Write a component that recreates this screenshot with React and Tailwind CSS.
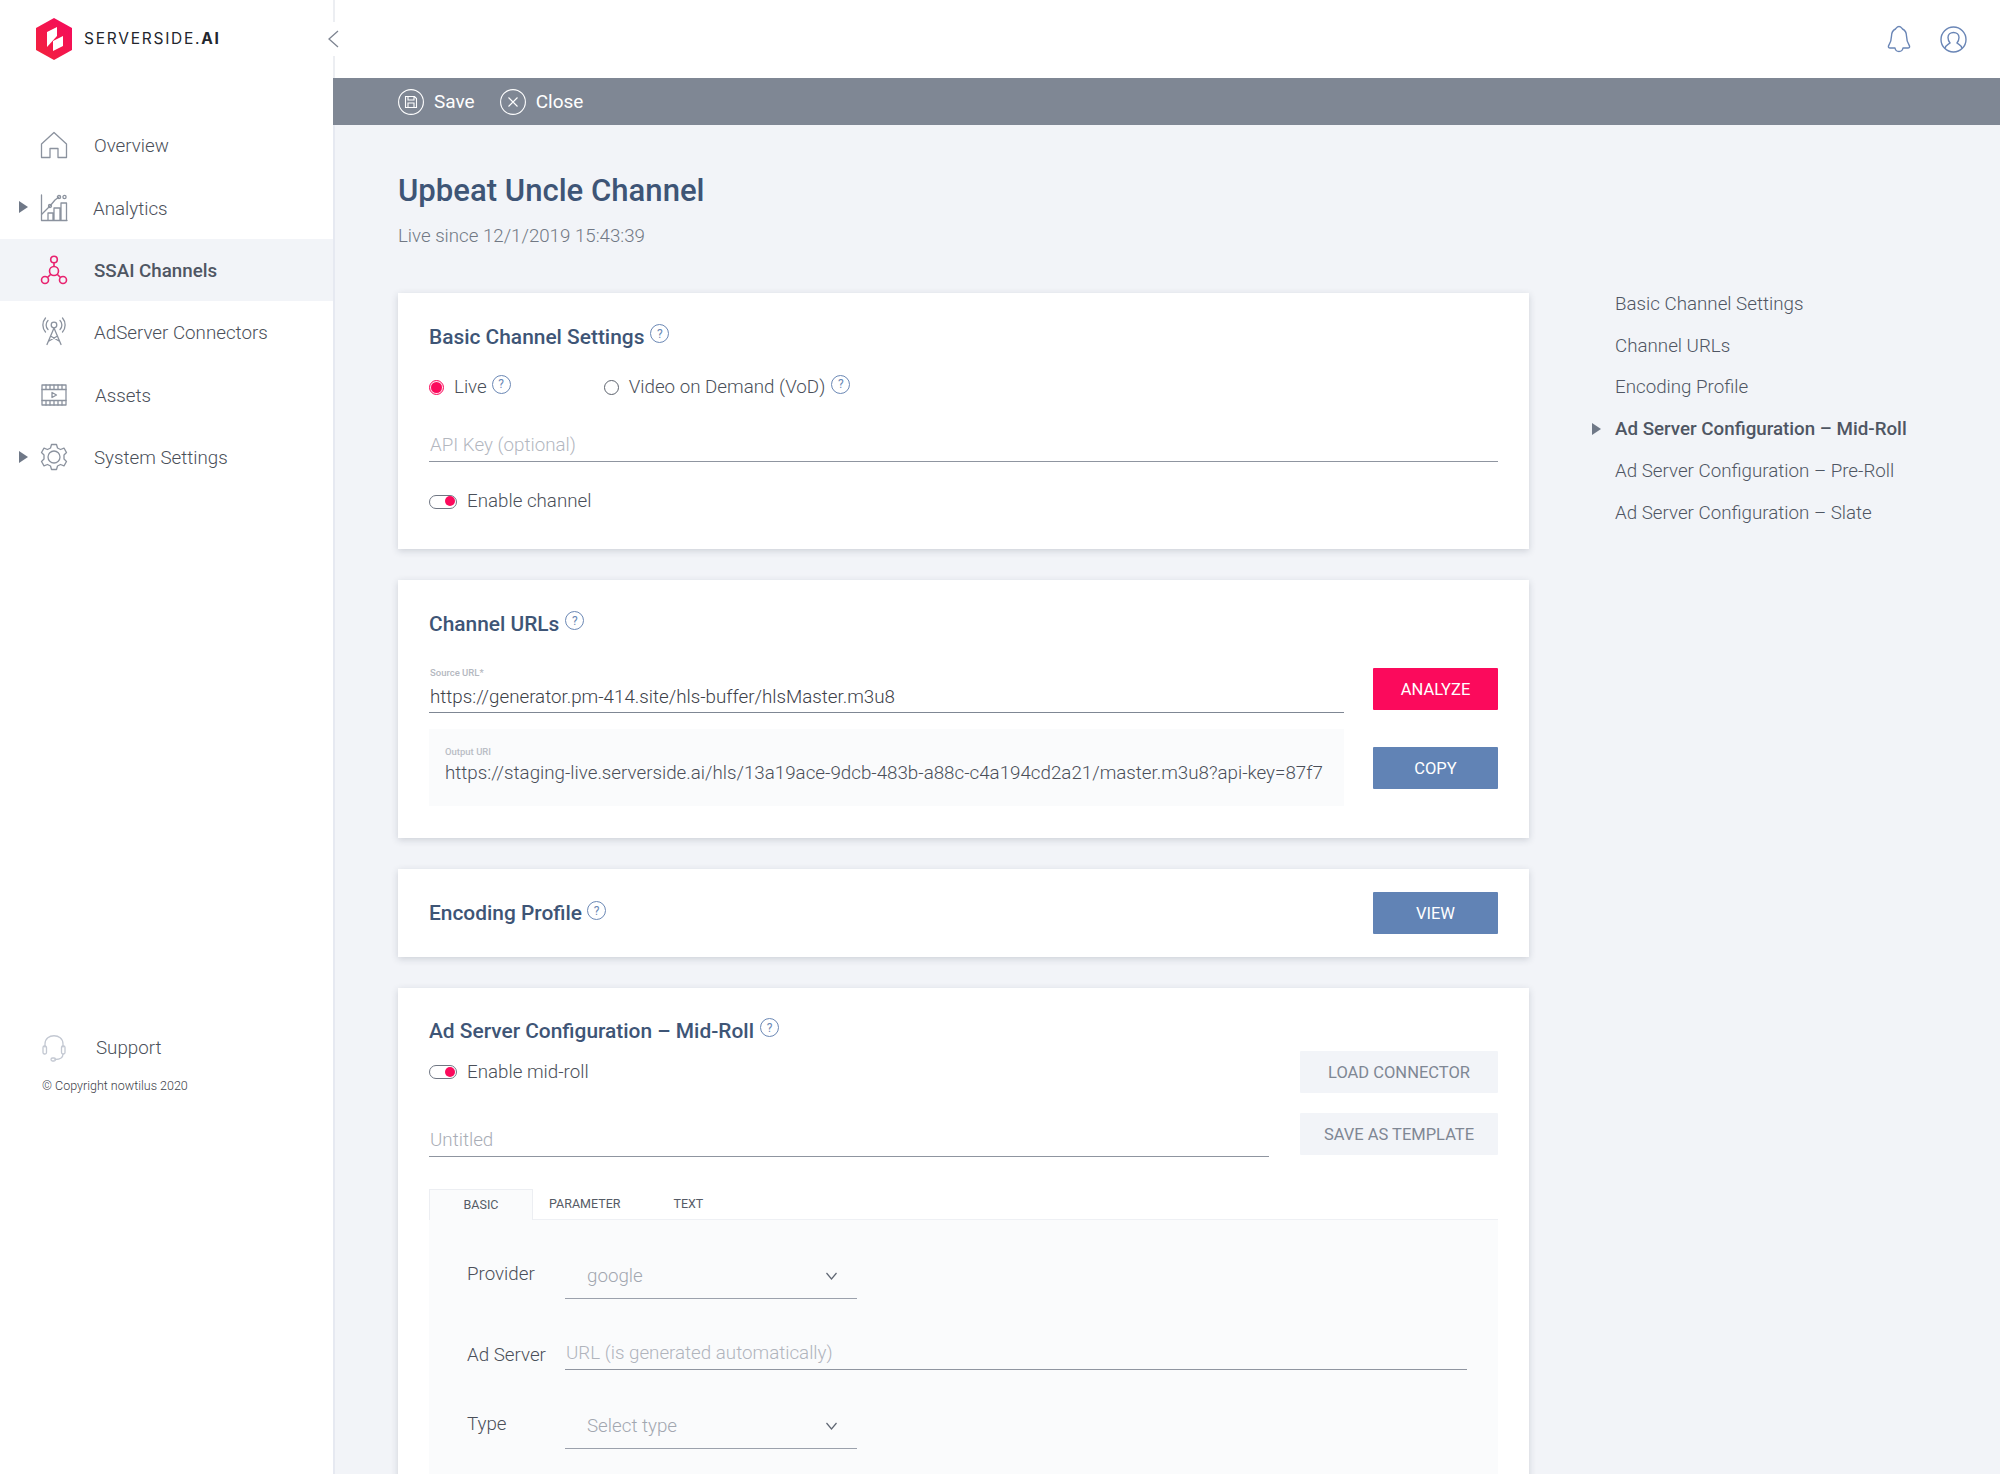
import React from "react";

const Help = ({ className = "" }) => (
  <span className={`inline-flex h-[19px] w-[19px] items-center justify-center rounded-full border border-[#6b88b5] text-[12px] font-normal leading-none text-[#6b88b5] ${className}`}>?</span>
);

const Tri = () => (
  <svg width="9" height="12" viewBox="0 0 9 12"><path d="M0 0 L9 6 L0 12Z" fill="#6f7887" /></svg>
);

const stroke = { fill: "none", stroke: "#8b929e", strokeWidth: 1.3, strokeLinejoin: "round", strokeLinecap: "round" };

const icons = {
  home: (
    <svg width="28" height="28" viewBox="0 0 28 28" {...stroke}>
      <path d="M1.5 13 L14 1.5 L26.5 13 V26.5 H18 V17.5 H10 V26.5 H1.5Z" />
    </svg>
  ),
  chart: (
    <svg width="28" height="28" viewBox="0 0 28 28" {...stroke}>
      <path d="M1.5 1 V26.5 H27" />
      <path d="M8 26 V19 H13 V26 M14 26 V14 H20 V26 M21 26 V9 H26.5 V26" />
      <path d="M2 20 L10 12 L15 6 L19 3" />
      <circle cx="10" cy="12" r="1.5" /><circle cx="19" cy="3" r="1.6" /><circle cx="24.5" cy="3" r="1.6" />
    </svg>
  ),
  nodes: (
    <svg width="28" height="30" viewBox="0 0 28 30" fill="none" stroke="#e8226f" strokeWidth="1.6">
      <circle cx="14" cy="4.5" r="3.3" /><circle cx="14" cy="16" r="4.5" /><circle cx="5" cy="25" r="3.5" /><circle cx="23" cy="25" r="3.5" />
      <path d="M14 8 V11.5 M10.8 19.2 L7.5 22.5 M17.2 19.2 L20.5 22.5" />
    </svg>
  ),
  antenna: (
    <svg width="24" height="30" viewBox="0 0 24 30" {...stroke}>
      <circle cx="12" cy="8" r="2.8" />
      <path d="M12 11 L5 27.5 M12 11 L19 27.5 M8.5 19 L17 24 M15.5 19 L7 24" />
      <path d="M6 3.5 C3.5 6 3.5 10 6 12.5 M18 3.5 C20.5 6 20.5 10 18 12.5 M3.5 1 C0 5 0 11 3.5 15 M20.5 1 C24 5 24 11 20.5 15" />
    </svg>
  ),
  film: (
    <svg width="26" height="22" viewBox="0 0 26 22" {...stroke}>
      <rect x="1" y="1" width="24" height="20" />
      <path d="M1 5.5 H25 M1 16.5 H25 M5 1 V5.5 M9 1 V5.5 M13 1 V5.5 M17 1 V5.5 M21 1 V5.5 M5 16.5 V21 M9 16.5 V21 M13 16.5 V21 M17 16.5 V21 M21 16.5 V21" />
      <path d="M11 8.5 L15.5 11 L11 13.5Z" />
    </svg>
  ),
  gear: (
    <svg width="28" height="28" viewBox="0 0 28 28" {...stroke}>
      <circle cx="14" cy="14" r="6" />
      <path d="M11.5 1.5 H16.5 L17.5 5 L20.5 6.5 L24 5.2 L26.5 9.5 L24 12 V16 L26.5 18.5 L24 22.8 L20.5 21.5 L17.5 23 L16.5 26.5 H11.5 L10.5 23 L7.5 21.5 L4 22.8 L1.5 18.5 L4 16 V12 L1.5 9.5 L4 5.2 L7.5 6.5 L10.5 5Z" />
    </svg>
  ),
};

const Nav = ({ icon, label, arrow, active, labelClass = "ml-[26px]" }) => (
  <div className={`relative flex h-[62.4px] items-center pl-[40px] ${active ? "bg-[#f2f4f8]" : ""}`}>
    {arrow && <span className="absolute left-[19px] top-[25px] flex"><Tri /></span>}
    <span className="flex w-[28px] justify-center">{icon}</span>
    <span className={`${labelClass} pt-[2px] text-[18.75px] ${active ? "font-medium text-[#4f5663]" : "font-light text-[#4a4f59]"}`}>{label}</span>
  </div>
);

const Sidebar = () => (
  <aside className="relative z-10 flex w-[333px] shrink-0 flex-col bg-white">
    <div className="flex h-[78px] items-center pl-[35px]">
      <svg width="38" height="42" viewBox="0 0 38 42">
        <defs>
          <linearGradient id="lg" x1="0" y1="1" x2="1" y2="0">
            <stop offset="0" stopColor="#f2243a" />
            <stop offset="1" stopColor="#f5095f" />
          </linearGradient>
        </defs>
        <path d="M19 0 L37 10 V32 L19 42 L1 32 V10Z" fill="url(#lg)" />
        <path d="M12 14 L22 9 V18 L12 29Z" fill="#fff" />
        <path d="M18 23 L28 18 V28 L18 33Z" fill="#fff" />
      </svg>
      <span className="ml-[11px] text-[15.5px] font-normal tracking-[1.75px] text-[#23262d]" style={{ fontFamily: "Inter, sans-serif" }}>SERVERSIDE.<b className="font-bold">AI</b></span>
    </div>
    <nav className="mt-[36px] flex flex-col">
      <Nav icon={icons.home} label="Overview" />
      <Nav icon={icons.chart} label="Analytics" labelClass="ml-[25px]" arrow />
      <Nav icon={icons.nodes} label="SSAI Channels" active />
      <Nav icon={icons.antenna} label="AdServer Connectors" />
      <Nav icon={icons.film} label="Assets" labelClass="ml-[27px]" />
      <Nav icon={icons.gear} label="System Settings" arrow />
    </nav>
    <div className="mt-[546px] flex items-center pl-[42px]">
      <svg width="24" height="28" viewBox="0 0 24 28" fill="none" stroke="#c3c8d2" strokeWidth="1.3" strokeLinecap="round">
        <path d="M3 13 V10 C3 -1 21 -1 21 10 V13" />
        <rect x="1" y="12" width="3.5" height="8" rx="1.5" /><rect x="19.5" y="12" width="3.5" height="8" rx="1.5" />
        <path d="M21 20 C21 24 18 25.5 13 25.5" /><rect x="9" y="24" width="4.5" height="3" rx="1.5" />
      </svg>
      <span className="ml-[30px] text-[18.75px] font-light text-[#4a4f59]">Support</span>
    </div>
    <p className="ml-[42px] mt-[15px] text-[12.5px] font-light text-[#3d4149]">© Copyright nowtilus 2020</p>
    <div className="absolute right-[-8px] top-[22px] flex h-[34px] w-[16px] items-center justify-center bg-white">
      <svg width="12" height="18" viewBox="0 0 12 18" fill="none" stroke="#7d8491" strokeWidth="1.3"><path d="M11 1 L2 9 L11 17" /></svg>
    </div>
  </aside>
);

const Card = ({ className = "", children }) => (
  <section className={`bg-white px-[31px] shadow-[0_2px_7px_rgba(40,50,70,0.18)] ${className}`}>{children}</section>
);

const Title = ({ children, helpClass = "mb-[8px]" }) => (
  <h2 className="flex items-center gap-[6px] text-[20.9px] font-medium text-[#3e5576]">
    {children}
    <Help className={helpClass} />
  </h2>
);

const Toggle = () => (
  <span className="relative inline-block h-[14px] w-[28px] rounded-full border-[1.5px] border-[#6f7683] bg-white">
    <span className="absolute right-[1px] top-[0.5px] h-[10px] w-[10px] rounded-full bg-[#fb0a5c]" />
  </span>
);

const Btn = ({ children, className }) => (
  <button className={`flex h-[42px] items-center justify-center rounded-[1px] pt-[2px] text-[16.5px] ${className}`}>{children}</button>
);

const Chevron = () => (
  <svg width="11" height="8" viewBox="0 0 11 8" fill="none" stroke="#5f6672" strokeWidth="1.2"><path d="M0.5 1 L5.5 7 L10.5 1" /></svg>
);

const Select = ({ children }) => (
  <div className="flex h-[46px] w-[292px] items-center justify-between border-b-[1.5px] border-[#9ba1ac] pl-[22px] pr-[20px] text-[18.75px] font-light text-[#a2a7b0]">
    {children}
    <Chevron />
  </div>
);

const Main = () => (
  <main className="flex min-w-0 flex-1 flex-col">
    <header className="flex h-[78px] shrink-0 items-center justify-end border-l-[2px] border-[#eceef2] bg-white pr-[33px]">
      <svg width="24" height="28" viewBox="0 0 24 28" fill="none" stroke="#6a86b6" strokeWidth="1.4" strokeLinejoin="round">
        <path d="M12 1.5 C14 1.5 14.5 3 15.5 4 C18.5 5.5 19.5 8 19.5 11 C19.5 15 20.5 18 22.5 21 C23 22.5 22 23 21 23 H16 C15.5 26 13.5 26.5 12 26.5 C10.5 26.5 8.5 26 8 23 H3 C2 23 1 22.5 1.5 21 C3.5 18 4.5 15 4.5 11 C4.5 8 5.5 5.5 8.5 4 C9.5 3 10 1.5 12 1.5Z" />
      </svg>
      <svg className="ml-[29px]" width="27" height="27" viewBox="0 0 27 27" fill="none" stroke="#6a86b6" strokeWidth="1.4">
        <circle cx="13.5" cy="13.5" r="12.5" />
        <path d="M5 22.5 C5.5 19 8.5 18.5 10 17 C8.5 15 8 13 8 11.5 C8 8.5 10.5 6.5 13.5 6.5 C16.5 6.5 19 8.5 19 11.5 C19 13 18.5 15 17 17 C18.5 18.5 21.5 19 22 22.5" />
      </svg>
    </header>
    <div className="flex h-[47px] shrink-0 items-center bg-[#7f8794] pl-[65px] text-[19px] font-normal text-white">
      <svg width="26" height="26" viewBox="0 0 26 26" fill="none" stroke="#fff" strokeWidth="1.1">
        <circle cx="13" cy="13" r="12.4" />
        <path d="M7.5 7.5 H16.5 L18.5 9.5 V18.5 H7.5Z M10 7.5 V11 H16 V7.5 M10 18.5 V14 H16 V18.5" />
      </svg>
      <span className="ml-[10px] pt-[1px]">Save</span>
      <svg className="ml-[25px]" width="26" height="26" viewBox="0 0 26 26" fill="none" stroke="#fff" strokeWidth="1.1">
        <circle cx="13" cy="13" r="12.4" />
        <path d="M8.5 8.5 L17.5 17.5 M17.5 8.5 L8.5 17.5" />
      </svg>
      <span className="ml-[10px] pt-[1px]">Close</span>
    </div>
    <div className="flex-1 overflow-hidden border-l-[2px] border-[#e6e9f1] bg-[#f2f4f8] pl-[63px]">
      <h1 className="mt-[46px] text-[31.1px] font-medium leading-[40px] text-[#3e5576]">Upbeat Uncle Channel</h1>
      <p className="mt-[13px] text-[18.7px] font-light leading-[24px] text-[#717884]">Live since 12/1/2019 15:43:39</p>
      <div className="mt-[45px] flex">
        <div className="flex w-[1131px] shrink-0 flex-col gap-[31px]">
          <Card className="h-[256px] pt-[29px]">
            <Title>Basic Channel Settings</Title>
            <div className="mt-[20px] flex items-center text-[18.75px] font-light text-[#4a4f59]">
              <span className="flex h-[15px] w-[15px] items-center justify-center rounded-full border border-[#fb0a5c] bg-[#fde3ec]"><span className="h-[11px] w-[11px] rounded-full bg-[#fb0a5c]" /></span>
              <span className="ml-[10px]">Live</span>
              <Help className="mb-[6px] ml-[5px]" />
              <span className="ml-[93px] h-[15px] w-[15px] rounded-full border-[1.5px] border-[#5c626d]" />
              <span className="ml-[10px]">Video on Demand (VoD)</span>
              <Help className="mb-[6px] ml-[6px]" />
            </div>
            <div className="mt-[29px] border-b-[1.5px] border-[#8f95a0] pb-[1px] pl-[1px] text-[18.75px] font-light leading-[30px] text-[#b3b7bf]">API Key (optional)</div>
            <div className="mt-[25px] flex items-center text-[18.75px] font-light text-[#4a4f59]">
              <Toggle />
              <span className="ml-[10px]">Enable channel</span>
            </div>
          </Card>
          <Card className="h-[258px] pt-[29px]">
            <Title>Channel URLs</Title>
            <div className="mt-[27px] flex gap-[29px]">
              <div className="min-w-0 flex-1">
                <div className="pl-[1px] text-[9.5px] font-medium leading-[12px] text-[#b4b8c0]">Source URL*</div>
                <div className="mt-[3px] border-b-[1.5px] border-[#7f8794] pl-[1px] text-[18.75px] font-light leading-[30px] text-[#3d4149]">https://generator.pm-414.site/hls-buffer/hlsMaster.m3u8</div>
                <div className="mt-[16px] h-[77px] bg-[#fafbfc] px-[16px] pt-[17px]">
                  <div className="text-[9.5px] font-medium leading-[12px] text-[#b9bdc5]">Output URI</div>
                  <div className="whitespace-nowrap text-[18.75px] font-light leading-[30px] text-[#4a4f59]">https://staging-live.serverside.ai/hls/13a19ace-9dcb-483b-a88c-c4a194cd2a21/master.m3u8?api-key=87f7</div>
                </div>
              </div>
              <div className="mt-[1px] flex w-[125px] shrink-0 flex-col gap-[37px]">
                <Btn className="bg-[#fb0a5c] text-white">ANALYZE</Btn>
                <Btn className="bg-[#6183b5] text-white">COPY</Btn>
              </div>
            </div>
          </Card>
          <Card className="flex h-[88px] items-center justify-between">
            <div className="pt-[2px]"><Title helpClass="mb-[6px] -ml-[1px]">Encoding Profile</Title></div>
            <Btn className="w-[125px] bg-[#6183b5] text-white">VIEW</Btn>
          </Card>
          <Card className="h-[600px] pt-[28px]">
            <Title>Ad Server Configuration – Mid-Roll</Title>
            <div className="flex gap-[31px]">
              <div className="flex-1">
                <div className="mt-[11px] flex items-center text-[18.75px] font-light text-[#4a4f59]">
                  <Toggle />
                  <span className="ml-[10px]">Enable mid-roll</span>
                </div>
                <div className="mt-[39px] border-b-[1.5px] border-[#8f95a0] pb-[1px] pl-[1px] text-[18.75px] font-light leading-[30px] text-[#a9adb6]">Untitled</div>
              </div>
              <div className="flex w-[198px] shrink-0 flex-col gap-[20px] pt-[4px]">
                <Btn className="bg-[#f2f4f8] text-[#7f8794]">LOAD CONNECTOR</Btn>
                <Btn className="bg-[#f2f4f8] text-[#7f8794]">SAVE AS TEMPLATE</Btn>
              </div>
            </div>
            <div className="mt-[32px] flex h-[31px] items-center border-b border-[#eef0f4] text-[12.5px] font-normal text-[#555b66]">
              <span className="flex h-[31px] w-[104px] items-center justify-center border border-b-0 border-[#eceef2] bg-[#fafbfc]">BASIC</span>
              <span className="ml-[16px]">PARAMETER</span>
              <span className="ml-[53px]">TEXT</span>
            </div>
            <div className="h-[300px] bg-[#fafbfc] pl-[38px] pr-[31px] pt-[33px]">
              <div className="flex items-end">
                <span className="w-[98px] pb-[11px] text-[18.75px] font-light text-[#4a4f59]">Provider</span>
                <Select>google</Select>
              </div>
              <div className="mt-[39px] flex items-end">
                <span className="w-[98px] pb-[1px] text-[18.75px] font-light text-[#4a4f59]">Ad Server</span>
                <div className="flex-1 border-b-[1.5px] border-[#8f95a0] pb-[1px] pl-[1px] text-[18.75px] font-light leading-[30px] text-[#b0b4bc]">URL (is generated automatically)</div>
              </div>
              <div className="mt-[33px] flex items-end">
                <span className="w-[98px] pb-[11px] text-[18.75px] font-light text-[#4a4f59]">Type</span>
                <Select>Select type</Select>
              </div>
            </div>
          </Card>
        </div>
        <ul className="ml-[86px] mt-[-10px] flex flex-col text-[18.75px] font-light text-[#4f5663]">
          {[
            "Basic Channel Settings",
            "Channel URLs",
            "Encoding Profile",
            "Ad Server Configuration – Mid-Roll",
            "Ad Server Configuration – Pre-Roll",
            "Ad Server Configuration – Slate",
          ].map((t, i) => (
            <li key={t} className={`relative flex h-[41.8px] items-center whitespace-nowrap ${i === 3 ? "font-medium" : ""}`}>
              {i === 3 && <span className="absolute left-[-23px] top-[15px] flex"><Tri /></span>}
              {t}
            </li>
          ))}
        </ul>
      </div>
    </div>
  </main>
);

export default function App() {
  return (
    <div className="flex h-[1474px] w-[2000px] overflow-hidden bg-white" style={{ fontFamily: "Roboto, sans-serif" }}>
      <Sidebar />
      <Main />
    </div>
  );
}
